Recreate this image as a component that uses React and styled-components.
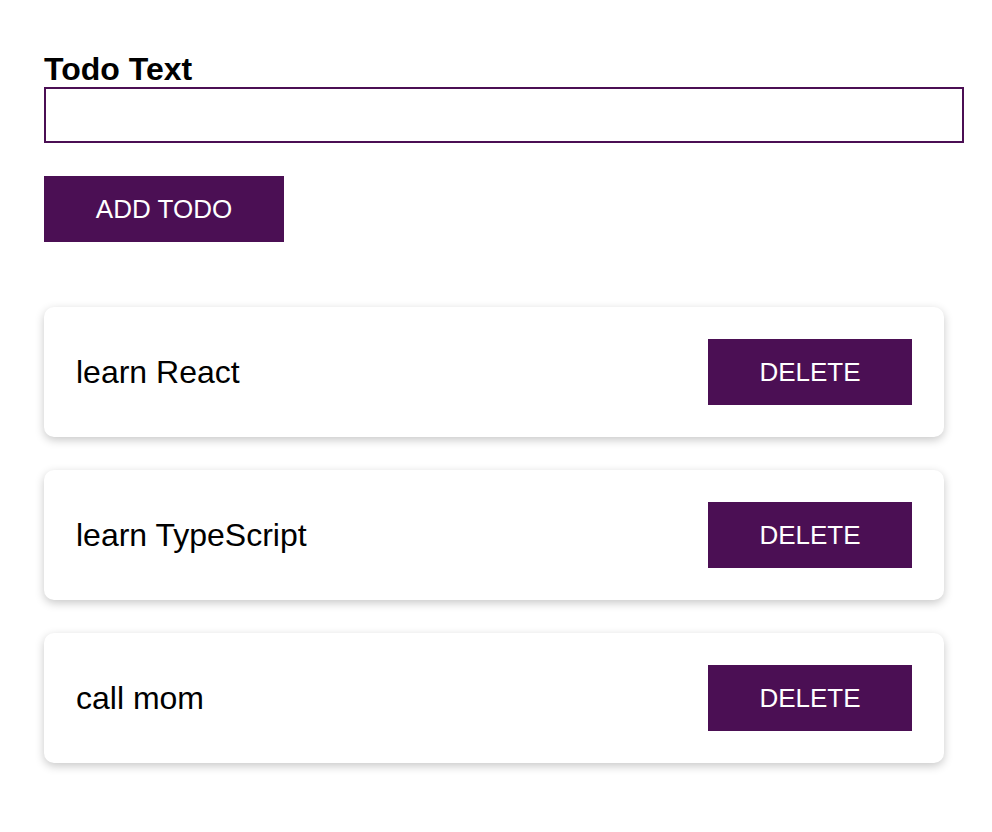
import React, { useState } from 'react';
import styled, { createGlobalStyle } from 'styled-components';

const purple = '#4b0f54';

const GlobalStyle = createGlobalStyle`
  body {
    margin: 0;
    background: #ffffff;
    font-family: 'Liberation Sans', Arial, Helvetica, sans-serif;
    color: #000000;
  }
`;

const Page = styled.div`
  padding: 51px 0 40px 44px;
`;

const Form = styled.form`
  display: flex;
  flex-direction: column;
  align-items: flex-start;
`;

const Label = styled.label`
  display: block;
  font-size: 32px;
  line-height: 36px;
  font-weight: bold;
`;

const TextInput = styled.input`
  box-sizing: border-box;
  width: 920px;
  height: 56px;
  margin: 0;
  padding: 0 12px;
  border: 2px solid ${purple};
  border-radius: 0;
  font-family: inherit;
  font-size: 26px;
  outline: none;
`;

const Button = styled.button`
  box-sizing: border-box;
  width: ${({ wide }) => (wide ? '240px' : '204px')};
  height: 66px;
  margin-top: ${({ wide }) => (wide ? '33px' : '0')};
  padding: 0;
  border: none;
  border-radius: 0;
  background: ${purple};
  color: #ffffff;
  font-family: inherit;
  font-size: 26px;
  text-transform: uppercase;
  cursor: pointer;
`;

const List = styled.ul`
  list-style: none;
  margin: 65px 0 0 0;
  padding: 0;
  display: flex;
  flex-direction: column;
  gap: 33px;
`;

const Card = styled.li`
  box-sizing: border-box;
  width: 900px;
  height: 130px;
  padding: 0 32px;
  display: flex;
  align-items: center;
  justify-content: space-between;
  background: #ffffff;
  border-radius: 10px;
  box-shadow: 0 3px 10px rgba(0, 0, 0, 0.22);
`;

const CardText = styled.span`
  font-size: 32px;
`;

const App = () => {
  const [text, setText] = useState('');
  const [todos, setTodos] = useState([
    { id: 1, text: 'learn React' },
    { id: 2, text: 'learn TypeScript' },
    { id: 3, text: 'call mom' },
  ]);

  const addTodo = e => {
    e.preventDefault();
    if (!text.trim()) return;
    setTodos([...todos, { id: Date.now(), text }]);
    setText('');
  };

  return (
    <Page>
      <GlobalStyle />
      <Form onSubmit={addTodo}>
        <Label htmlFor="todo-text">Todo Text</Label>
        <TextInput id="todo-text" value={text} onChange={e => setText(e.target.value)} />
        <Button wide type="submit">
          Add Todo
        </Button>
      </Form>
      <List>
        {todos.map(todo => (
          <Card key={todo.id}>
            <CardText>{todo.text}</CardText>
            <Button onClick={() => setTodos(todos.filter(t => t.id !== todo.id))}>Delete</Button>
          </Card>
        ))}
      </List>
    </Page>
  );
};

export default App;
